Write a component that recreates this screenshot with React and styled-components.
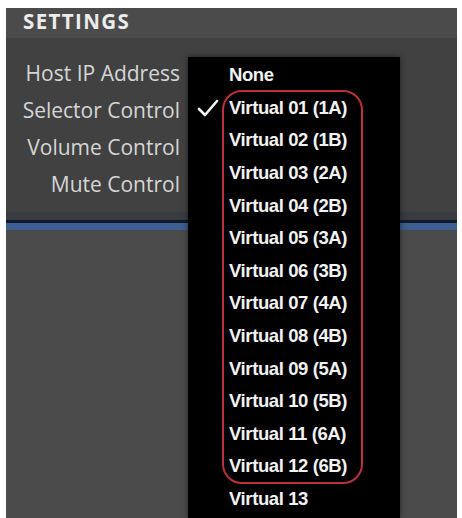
import React from 'react';
import styled, { createGlobalStyle } from 'styled-components';

const GlobalStyle = createGlobalStyle`
  html, body {
    margin: 0;
    padding: 0;
    background: #ffffff;
  }
`;

const Page = styled.div`
  position: relative;
  width: 462px;
  height: 518px;
  overflow: hidden;
  background: #ffffff;
`;

const Frame = styled.div`
  margin: 8px 5px 0 6px;
  height: 510px;
  display: flex;
  flex-direction: column;
  background: #4b4b4b;
`;

const Header = styled.div`
  height: 30px;
  flex: none;
  background: #4b4b4b;
  color: #ececec;
  font-family: "Open Sans", "Noto Sans", sans-serif;
  font-weight: 700;
  font-size: 20.5px;
  line-height: 26px;
  padding-left: 17px;
  letter-spacing: 1.4px;
`;

const SettingsPanel = styled.div`
  height: 174px;
  flex: none;
  background: #414141;
  display: flex;
`;

const LabelColumn = styled.div`
  width: 174px;
  padding-top: 20px;
  display: flex;
  flex-direction: column;
  align-items: flex-end;
`;

const Label = styled.div`
  height: 37px;
  line-height: 30px;
  color: #d6d6d6;
  font-family: "Open Sans", "Noto Sans", sans-serif;
  font-size: 21px;
  letter-spacing: 0;
  white-space: nowrap;
`;

const Divider = styled.div`
  flex: none;
  height: 8px;
  background: #383b40;
  border-bottom: 3px solid #111a28;
`;

const BlueLine = styled.div`
  flex: none;
  height: 7px;
  background: #3c5e90;
`;

const Lower = styled.div`
  flex: 1;
  background: #4b4b4b;
`;

const Menu = styled.div`
  position: absolute;
  left: 188px;
  top: 57px;
  width: 212px;
  bottom: 0;
  background: #000000;
  padding-top: 2px;
  box-shadow: 0 0 6px rgba(0, 0, 0, 0.5);
`;

const Item = styled.div`
  height: 32.6px;
  display: flex;
  align-items: center;
  color: #f2f2f2;
  font-family: "Liberation Sans", Arial, sans-serif;
  font-weight: 700;
  font-size: 18.5px;
  letter-spacing: -0.4px;
  white-space: nowrap;
`;

const CheckCell = styled.span`
  width: 41px;
  flex: none;
  display: flex;
  padding-left: 9px;
  box-sizing: border-box;
`;

const Highlight = styled.div`
  position: absolute;
  left: 34px;
  top: 33px;
  width: 141px;
  height: 394px;
  border: 2.5px solid #bd2f3a;
  border-radius: 20px;
  box-sizing: border-box;
  pointer-events: none;
`;

const Check = () => (
  <svg width="22" height="20" viewBox="0 0 22 20">
    <path d="M2 11 L8 17 L20 3" fill="none" stroke="#f4f4f4" strokeWidth="2.6" strokeLinecap="round" strokeLinejoin="round" />
  </svg>
);

const labels = ['Host IP Address', 'Selector Control', 'Volume Control', 'Mute Control'];

const options = [
  'None',
  'Virtual 01 (1A)',
  'Virtual 02 (1B)',
  'Virtual 03 (2A)',
  'Virtual 04 (2B)',
  'Virtual 05 (3A)',
  'Virtual 06 (3B)',
  'Virtual 07 (4A)',
  'Virtual 08 (4B)',
  'Virtual 09 (5A)',
  'Virtual 10 (5B)',
  'Virtual 11 (6A)',
  'Virtual 12 (6B)',
  'Virtual 13',
];

const selected = 'Virtual 01 (1A)';

export default function App() {
  return (
    <Page>
      <GlobalStyle />
      <Frame>
        <Header>SETTINGS</Header>
        <SettingsPanel>
          <LabelColumn>
            {labels.map((l) => (
              <Label key={l}>{l}</Label>
            ))}
          </LabelColumn>
        </SettingsPanel>
        <Divider />
        <BlueLine />
        <Lower />
      </Frame>
      <Menu>
        {options.map((o) => (
          <Item key={o}>
            <CheckCell>{o === selected && <Check />}</CheckCell>
            {o}
          </Item>
        ))}
        <Highlight />
      </Menu>
    </Page>
  );
}
